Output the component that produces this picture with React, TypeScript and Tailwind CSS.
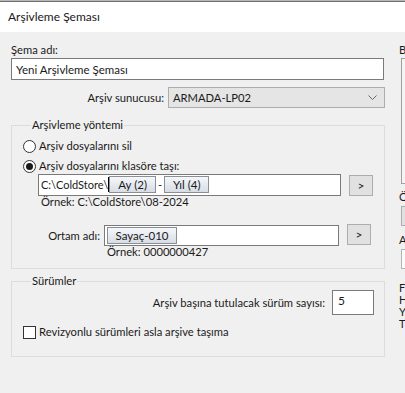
import React from 'react';

const font = { fontFamily: 'Lato, "Noto Sans", sans-serif' };

const Token: React.FC<{ label: string; w: string }> = ({ label, w }) => (
  <span
    className={`inline-flex h-[17px] ${w} items-center justify-center border border-[#8a8e96] bg-gradient-to-b from-[#f5f7fa] to-[#d8dde5] text-[11.5px] leading-none text-[#1a1a1a]`}
  >
    {label}
  </span>
);

const ArrowButton: React.FC = () => (
  <button className="flex h-[21px] w-[24px] items-center justify-center border border-[#adadad] bg-[#e1e1e1] text-[12px] text-[#222]">
    &gt;
  </button>
);

const Radio: React.FC<{ checked?: boolean; label: string }> = ({ checked, label }) => (
  <label className="flex h-[16px] items-center gap-[3px]">
    <span className="flex h-[13px] w-[13px] items-center justify-center rounded-full border border-[#333] bg-white">
      {checked && <span className="h-[7px] w-[7px] rounded-full bg-[#1a1a1a]" />}
    </span>
    <span>{label}</span>
  </label>
);

const App: React.FC = () => {
  return (
    <div
      className="h-[393px] w-[405px] overflow-hidden bg-[#f0f0f0] text-[11.2px] leading-[16px] text-[#1a1a1a]"
      style={font}
    >
      {/* leftover strip of the window behind */}
      <div className="h-[1px] bg-[#b8b8b8]" />
      <div className="h-[1px] bg-[#6f6f6f]" />

      <header className="flex h-[30px] items-center bg-white pl-[8px] text-[12px]">
        Arşivleme Şeması
      </header>

      <div className="flex">
        <div className="w-[385px] shrink-0 pl-[11px] pt-[10px]">
          <div className="h-[16px]">Şema adı:</div>
          <input
            readOnly
            value="Yeni Arşivleme Şeması"
            className="block h-[22px] w-[373px] border border-[#7a7a7a] bg-white px-[4px] text-[11.5px] outline-none"
          />

          <div className="mt-[7px] flex h-[21px] items-center">
            <span className="flex-1 pr-[4px] text-right">Arşiv sunucusu:</span>
            <div className="flex h-[21px] w-[217px] items-center justify-between border border-[#adadad] bg-[#e5e5e5] pl-[4px] pr-[7px]">
              <span>ARMADA-LP02</span>
              <svg width="9" height="5" viewBox="0 0 9 5" fill="none">
                <path d="M0.5 0.5 L4.5 4.5 L8.5 0.5" stroke="#6a6a6a" strokeWidth="1" />
              </svg>
            </div>
          </div>

          <fieldset className="mt-[9px] w-[374px] border border-[#dcdcdc] pb-[10px] pl-[11px] pr-[11px]">
            <legend className="ml-[8px] px-[1px]">Arşivleme yöntemi</legend>
            <div className="mt-[5px]">
              <Radio label="Arşiv dosyalarını sil" />
            </div>
            <div className="mt-[4px]">
              <Radio checked label="Arşiv dosyalarını klasöre taşı:" />
            </div>

            <div className="flex items-start pl-[15px]">
              <div className="flex h-[22px] w-[303px] items-start border border-[#7a7a7a] bg-white pl-[2px] pt-[1px]">
                <span className="text-[11px] leading-[17px]">C:\ColdStore\</span>
                <span className="mt-[1px] h-[15px] w-[1px] bg-black" />
                <Token label="Ay (2)" w="w-[47px]" />
                <span className="px-[2px] leading-[17px]">-</span>
                <Token label="Yıl (4)" w="w-[45px]" />
              </div>
              <div className="ml-[8px] mt-[1px]">
                <ArrowButton />
              </div>
            </div>
            <div className="pl-[18px] leading-[12px]">Örnek: C:\ColdStore\08-2024</div>

            <div className="mt-[17px] flex items-start">
              <span className="w-[81px] pr-[4px] text-right leading-[21px]">Ortam adı:</span>
              <div className="flex h-[21px] w-[235px] items-start border border-[#7a7a7a] bg-white pl-[2px] pt-[1px]">
                <Token label="Sayaç-010" w="w-[70px]" />
              </div>
              <div className="ml-[8px] mt-[-1px]">
                <ArrowButton />
              </div>
            </div>
            <div className="pl-[84px] leading-[12px]">Örnek: 0000000427</div>
          </fieldset>

          <fieldset className="mt-[4px] w-[374px] border border-[#dcdcdc] pb-[16px] pl-[11px] pr-[10px]">
            <legend className="ml-[8px] px-[1px]">Sürümler</legend>
            <div className="mt-[1px] flex items-center justify-end">
              <span className="pr-[7px]">Arşiv başına tutulacak sürüm sayısı:</span>
              <input
                readOnly
                value="5"
                className="block h-[25px] w-[42px] border border-[#7a7a7a] bg-white px-[5px] pb-[4px] text-[12px] outline-none"
              />
            </div>
            <label className="mt-[9px] flex items-center gap-[3px]">
              <span className="h-[13px] w-[13px] border border-[#333] bg-white" />
              <span>Revizyonlu sürümleri asla arşive taşıma</span>
            </label>
          </fieldset>
        </div>

        {/* next column, cut off by the window edge */}
        <div className="ml-[14px] w-[40px] shrink-0 pt-[10px]">
          <div className="h-[16px]">B</div>
          <div className="ml-[2px] h-[126px] border border-[#a0a0a0] bg-[#f4f4f4]" />
          <div className="mt-[5px] h-[16px]">Ö</div>
          <div className="ml-[2px] mt-[1px] h-[20px] border border-[#adadad] bg-[#e1e1e1]" />
          <div className="mt-[6px] h-[16px]">A</div>
          <div className="ml-[2px] mt-[1px] h-[20px] border border-[#b5b5b5] bg-[#fafafa]" />
          <div className="mt-[13px] text-[11px] leading-[12px]">
            <div>F</div>
            <div>H</div>
            <div>Y</div>
            <div>T</div>
          </div>
        </div>
      </div>
    </div>
  );
};

export default App;
